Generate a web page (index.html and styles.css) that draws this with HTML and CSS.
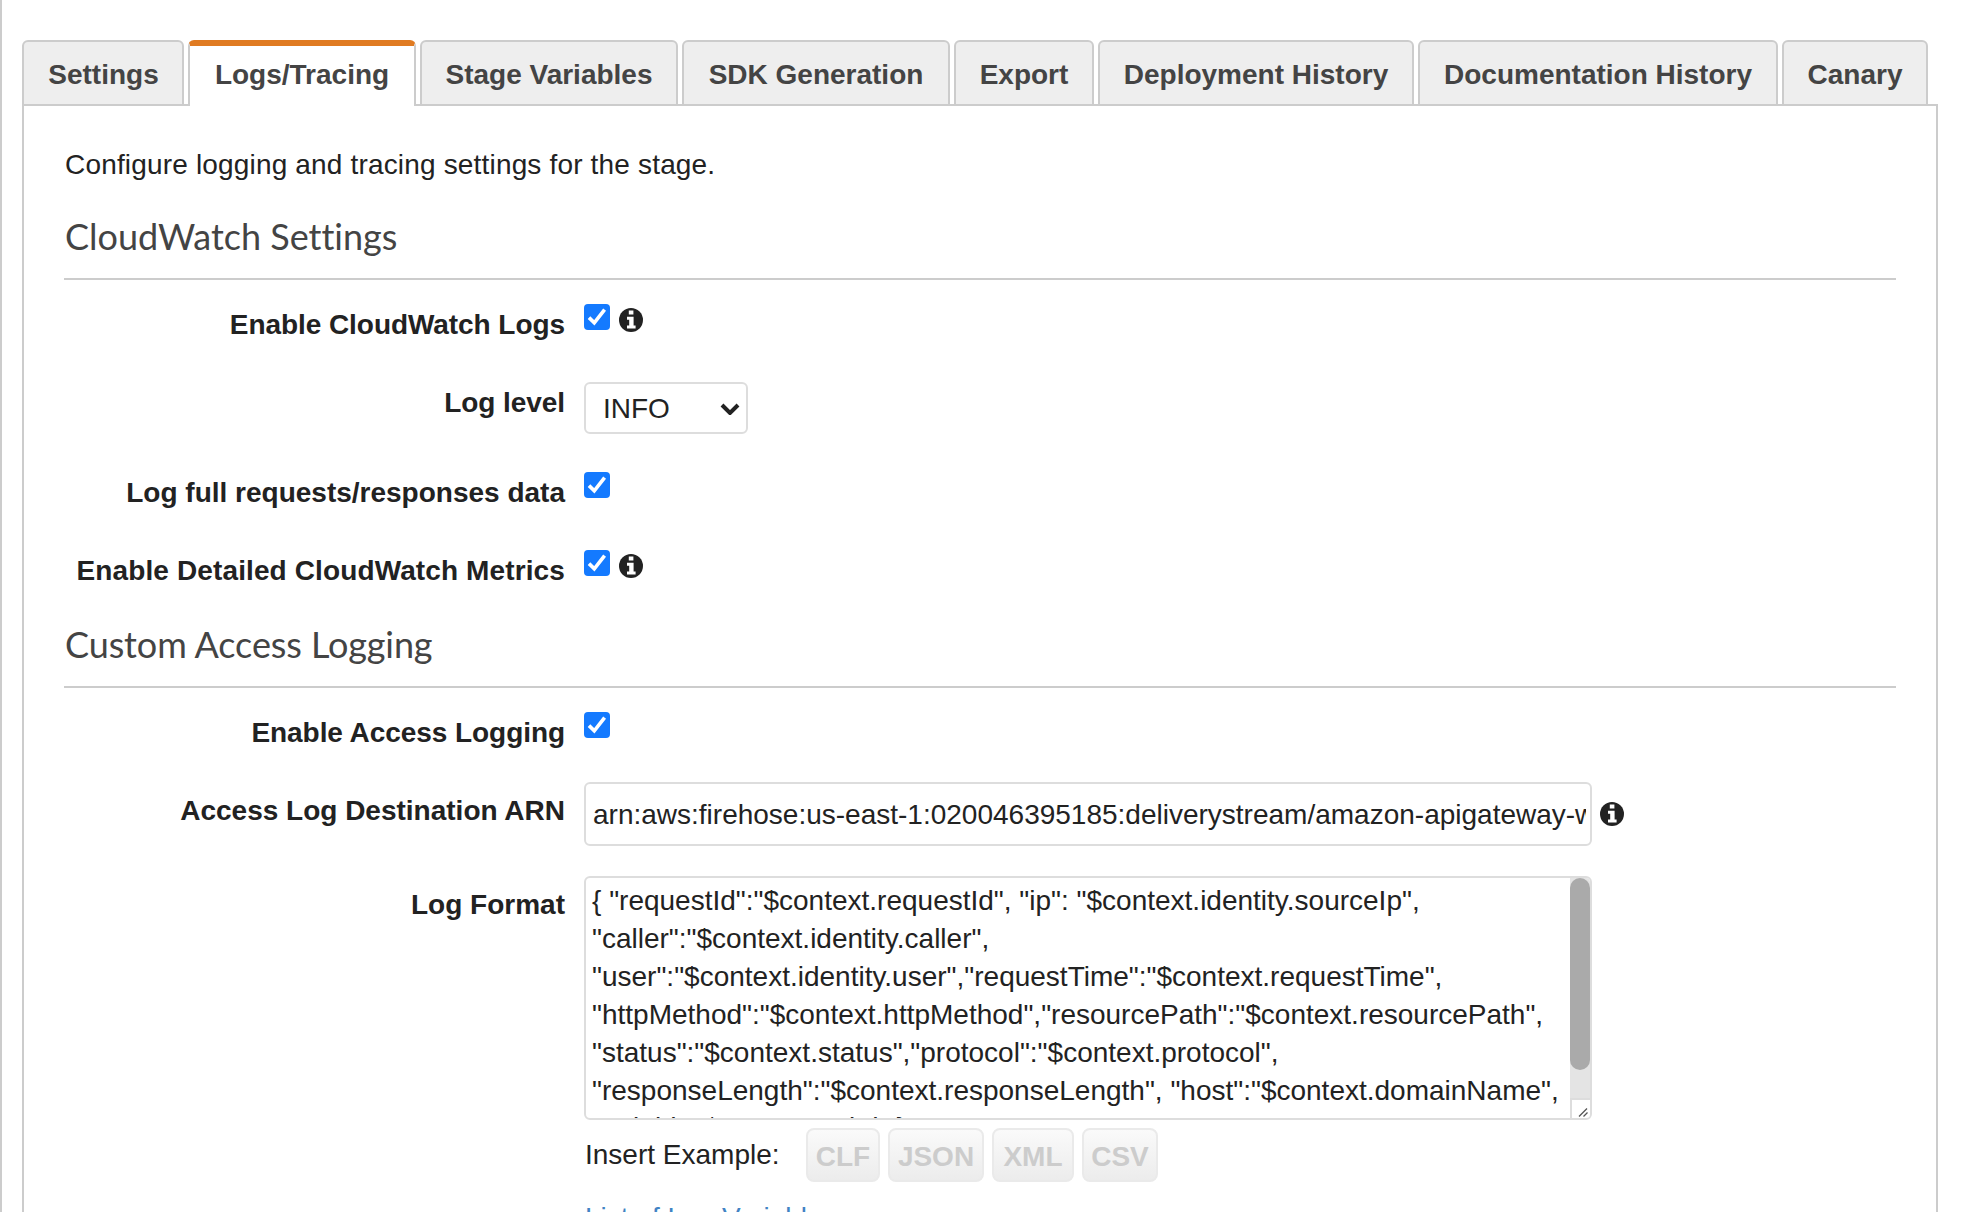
FILE: index.html
```html
<!DOCTYPE html>
<html lang="en">
<head>
<meta charset="utf-8">
<title>Stage Editor</title>
<link rel="stylesheet" href="styles.css">
</head>
<body>
<svg class="defs" width="0" height="0" aria-hidden="true">
  <symbol id="check" viewBox="0 0 26 26"><rect width="26" height="26" rx="4" fill="#147aff"/><path d="M5 13.6 10.3 18.8 20.6 5.6" fill="none" stroke="#fff" stroke-width="3.6"/></symbol>
  <symbol id="info" viewBox="0 0 24 24"><circle cx="12" cy="12" r="12" fill="#222"/><path d="M9.8 2.6h4.6v4H9.8zM8 8.8h6.6v8.6h2v3H8v-3h2.2v-5.6H8z" fill="#fff"/></symbol>
</svg>
<main class="page">
  <nav class="tabs">
    <a class="tab t1">Settings</a>
    <a class="tab active t2">Logs/Tracing</a>
    <a class="tab t3">Stage Variables</a>
    <a class="tab t4">SDK Generation</a>
    <a class="tab t5">Export</a>
    <a class="tab t6">Deployment History</a>
    <a class="tab t7">Documentation History</a>
    <a class="tab t8">Canary</a>
  </nav>
  <section class="panel">
    <p class="intro">Configure logging and tracing settings for the stage.</p>
    <h2>CloudWatch Settings</h2>
    <div class="row"><label class="narrow">Enable CloudWatch Logs</label><div class="control"><svg class="check"><use href="#check"/></svg><svg class="info"><use href="#info"/></svg></div></div>
    <div class="row row-select"><label class="narrow">Log level</label><div class="select"><span>INFO</span><svg class="chevron" viewBox="0 0 20 12"><path d="M2 2l8 8 8-8" fill="none" stroke="#222" stroke-width="4"/></svg></div></div>
    <div class="row"><label>Log full requests/responses data</label><div class="control"><svg class="check"><use href="#check"/></svg></div></div>
    <div class="row row-last"><label>Enable Detailed CloudWatch Metrics</label><div class="control"><svg class="check"><use href="#check"/></svg><svg class="info"><use href="#info"/></svg></div></div>
    <h2 class="second">Custom Access Logging</h2>
    <div class="row row-access"><label class="narrow">Enable Access Logging</label><div class="control"><svg class="check"><use href="#check"/></svg></div></div>
    <div class="row row-arn"><label>Access Log Destination ARN</label><div class="control"><div class="input"><div class="clip">arn:aws:firehose:us-east-1:020046395185:deliverystream/amazon-apigateway-w</div></div><svg class="info"><use href="#info"/></svg></div></div>
    <div class="row row-format"><label>Log Format</label>
      <div class="textarea">
        <div class="lines">
          <div>{ "requestId":"$context.requestId", "ip": "$context.identity.sourceIp",</div>
          <div>"caller":"$context.identity.caller",</div>
          <div>"user":"$context.identity.user","requestTime":"$context.requestTime",</div>
          <div>"httpMethod":"$context.httpMethod","resourcePath":"$context.resourcePath",</div>
          <div>"status":"$context.status","protocol":"$context.protocol",</div>
          <div>"responseLength":"$context.responseLength", "host":"$context.domainName",</div>
          <div class="cut">"api_id":"$context.apiId" }</div>
        </div>
        <div class="scroll"><div class="thumb"></div><svg class="grip" viewBox="0 0 18 18"><path d="M7 16.5l8-8M11.5 16.5l4-4" fill="none" stroke="#555" stroke-width="1.3"/></svg></div>
      </div>
    </div>
    <div class="examples"><span class="insert">Insert Example:</span><button class="b1">CLF</button><button class="b2">JSON</button><button class="b3">XML</button><button class="b4">CSV</button></div>
    <a class="link">List of Log Variables</a>
  </section>
</main>
</body>
</html>
```
FILE: styles.css
```css
* { box-sizing: border-box; }
body { margin: 0; background: #fff; color: #222; font: 28px/38px "Liberation Sans", Arial, sans-serif; }
.defs { position: absolute; }
.page { height: 1212px; overflow: hidden; border-left: 2px solid #ccc; padding: 40px 0 0 20px; }
.tabs { display: flex; gap: 4px; height: 66px; }
.tab { height: 66px; border: 2px solid #ccc; border-radius: 6px 6px 0 0; background: #eee; color: #444; font-weight: bold; padding-top: 14px; text-align: center; white-space: nowrap; }
.active { background: #fff; border-bottom: 0; border-top: 6px solid #e07b22; padding-top: 10px; z-index: 1; }
.t1 { width: 162px; padding-left: 1px; } .t2 { width: 228px; } .t3 { width: 258px; } .t4 { width: 268px; }
.t5 { width: 140px; } .t6 { width: 316px; } .t7 { width: 360px; } .t8 { width: 146px; }
.panel { margin-top: -2px; width: 1916px; height: 1200px; border: 2px solid #ccc; padding: 40px 40px 0; }
.intro { margin: 0; padding-left: 1px; letter-spacing: 0.17px; }
h2 { margin: 30px 0 24px; padding: 0 0 20px 1px; border-bottom: 2px solid #ccc; font: 36px/44px Lato, sans-serif; font-variant-ligatures: none; color: #444; }
.second { margin-top: 0; letter-spacing: -0.1px; }
.row { display: grid; grid-template-columns: 501px 1050px; column-gap: 19px; height: 78px; align-items: start; }
label { padding-top: 2px; text-align: right; font-weight: bold; white-space: nowrap; }
.narrow { letter-spacing: -0.06px; }
.row-select { height: 90px; } .row-last { height: 72px; } .row-access { height: 70px; } .row-arn { height: 94px; } .row-format { height: 252px; }
.row-last label { letter-spacing: 0.12px; }
.row-arn label, .row-format label { padding-top: 10px; }
.control { display: flex; gap: 9px; }
.check { width: 26px; height: 26px; flex: none; }
.info { width: 24px; height: 24px; flex: none; margin-top: 4px; }
.select { width: 164px; height: 52px; border: 2px solid #ddd; border-radius: 6px; display: flex; justify-content: space-between; align-items: center; padding: 1px 6px 0 17px; }
.chevron { width: 20px; height: 12px; }
.row-arn .control { gap: 8px; }
.input { width: 1008px; height: 64px; flex: none; border: 2px solid #ddd; border-radius: 6px; padding: 12px 4px 0 7px; }
.clip { overflow: hidden; white-space: nowrap; }
.row-arn .info { margin-top: 20px; }
.textarea { width: 1008px; height: 244px; border: 2px solid #ddd; border-radius: 6px; overflow: hidden; display: flex; justify-content: space-between; }
.lines { padding: 4px 0 0 6px; white-space: nowrap; }
.cut { margin-top: -1px; }
.scroll { width: 20px; background: #e4e4e4; display: flex; flex-direction: column; justify-content: space-between; }
.thumb { height: 192px; border-radius: 10px; background: #aaa; }
.grip { width: 20px; height: 20px; background: #fff; border: 2px solid #ddd; border-width: 2px 0 0 2px; }
.examples { display: flex; padding-left: 520px; height: 71px; }
.insert { width: 222px; padding: 8px 0 0 1px; white-space: nowrap; }
button { height: 54px; margin: 0 8px 0 0; padding: 3px 0 0; border: 2px solid #eaeaea; border-radius: 8px; background: linear-gradient(#fafafa, #ececec); color: #ccc; font: bold 28px/38px "Liberation Sans", Arial, sans-serif; }
.b1 { width: 74px; } .b2 { width: 96px; } .b3 { width: 82px; } .b4 { width: 76px; }
.link { display: block; padding-left: 521px; color: #4183c4; }
```
